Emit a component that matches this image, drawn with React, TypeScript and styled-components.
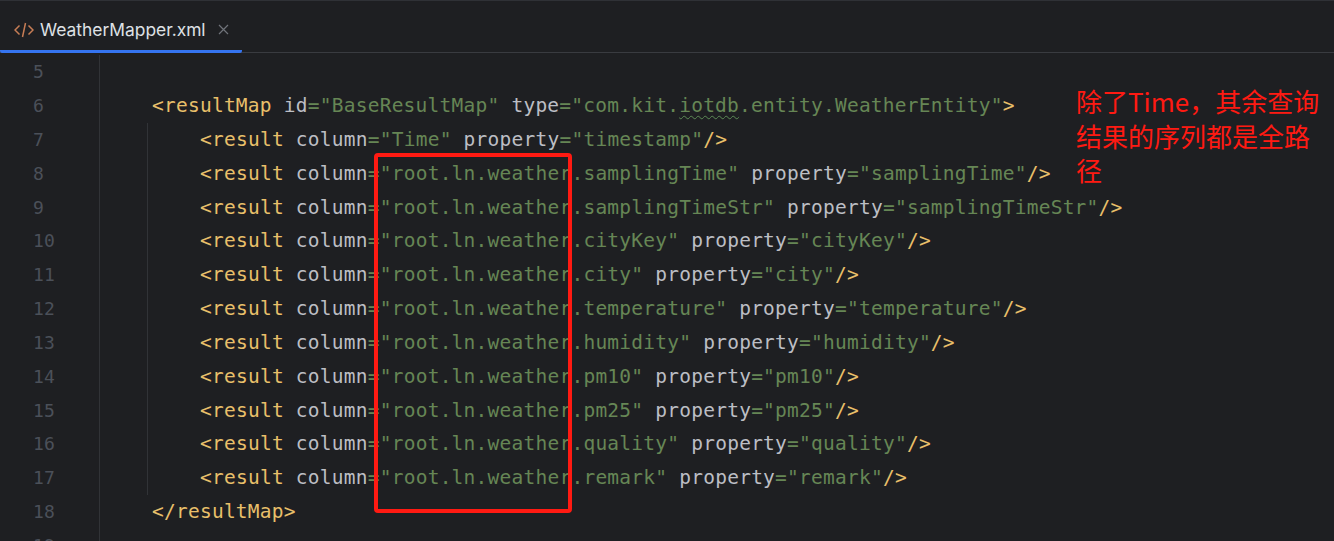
import React from 'react';
import styled, { createGlobalStyle } from 'styled-components';

const GlobalStyle = createGlobalStyle`
  html, body {
    margin: 0;
    padding: 0;
    height: 100%;
    background: #1e1f22;
    overflow: hidden;
  }
`;

const Window = styled.div`
  position: relative;
  width: 1334px;
  height: 541px;
  overflow: hidden;
  background: #1e1f22;
  border-top: 1px solid #2f3136;
  box-sizing: border-box;
`;

const TabBar = styled.div`
  display: flex;
  height: 52px;
  box-sizing: border-box;
  border-bottom: 1px solid #393b40;
`;

const Tab = styled.div`
  display: flex;
  align-items: center;
  gap: 6px;
  width: 242px;
  height: 52px;
  box-sizing: border-box;
  padding: 8px 0 0 14px;
  border-bottom: 3px solid #3574f0;
  border-radius: 0 0 2px 2px;
`;

const TabName = styled.span`
  font-family: 'Inter', 'Noto Sans', sans-serif;
  font-size: 17.4px;
  color: #dfe1e5;
`;

const CloseMark = styled.svg`
  margin-left: 6px;
`;

const Editor = styled.div`
  display: flex;
  padding-top: 2.4px;
`;

const Gutter = styled.div`
  flex: none;
  width: 100px;
  box-sizing: border-box;
  height: 500px;
  border-right: 1px solid #313337;
  padding-left: 33px;
`;

const LineNumber = styled.div`
  height: 33.82px;
  line-height: 33.82px;
  font-family: 'DejaVu Sans Mono', 'Liberation Mono', monospace;
  font-size: 18px;
  letter-spacing: 0.2px;
  color: #4b5059;
`;

const Code = styled.div`
  padding-left: 52px;
  font-family: 'DejaVu Sans Mono', 'Liberation Mono', monospace;
  font-size: 19.5px;
  letter-spacing: 0.24px;
  color: #bcbec4;
  white-space: pre;
`;

const Line = styled.div`
  height: 33.82px;
  line-height: 33.82px;
`;

const ResultGroup = styled.div`
  margin-left: -5px;
  padding-left: 52px;
  border-left: 1px solid #313337;
`;

const Tag = styled.span`
  color: #e8bf6a;
`;

const Str = styled.span`
  color: #668655;
`;

const Squiggle = styled.span`
  text-decoration: underline wavy #5c8a55 1px;
  text-underline-offset: 3px;
`;

const RedBox = styled.div`
  position: absolute;
  left: 374px;
  top: 152px;
  width: 198px;
  height: 360px;
  box-sizing: border-box;
  border: 4px solid #ff1a12;
  border-radius: 4px;
`;

const Note = styled.div`
  position: absolute;
  left: 1076px;
  top: 83px;
  width: 250px;
  font-family: 'Noto Sans CJK SC', 'Noto Sans', sans-serif;
  font-size: 26px;
  line-height: 34.6px;
  color: #ff1a12;
`;

const results: [string, string][] = [
  ['root.ln.weather.samplingTime', 'samplingTime'],
  ['root.ln.weather.samplingTimeStr', 'samplingTimeStr'],
  ['root.ln.weather.cityKey', 'cityKey'],
  ['root.ln.weather.city', 'city'],
  ['root.ln.weather.temperature', 'temperature'],
  ['root.ln.weather.humidity', 'humidity'],
  ['root.ln.weather.pm10', 'pm10'],
  ['root.ln.weather.pm25', 'pm25'],
  ['root.ln.weather.quality', 'quality'],
  ['root.ln.weather.remark', 'remark'],
];

function ResultLine({ column, property }: { column: string; property: string }) {
  return (
    <Line>
      <Tag>&lt;result</Tag> column<Str>="{column}"</Str> property<Str>="{property}"</Str>
      <Tag>/&gt;</Tag>
    </Line>
  );
}

export default function App() {
  return (
    <Window>
      <GlobalStyle />
      <TabBar>
        <Tab>
          <svg width="20" height="16" viewBox="0 0 20 16" fill="none" stroke="#c77d55" strokeWidth="1.5">
            <path d="M5.5 3.500 1 8l4.500 4.500" />
            <path d="M11.500 1 8.500 15" />
            <path d="M14.500 3.500 19 8l-4.500 4.500" />
          </svg>
          <TabName>WeatherMapper.xml</TabName>
          <CloseMark width="11" height="11" viewBox="0 0 11 11" stroke="#6f737a" strokeWidth="1.2">
            <path d="M1 1l9 9M10 1l-9 9" />
          </CloseMark>
        </Tab>
      </TabBar>
      <Editor>
        <Gutter>
          {[5, 6, 7, 8, 9, 10, 11, 12, 13, 14, 15, 16, 17, 18, 19].map((n) => (
            <LineNumber key={n}>{n}</LineNumber>
          ))}
        </Gutter>
        <Code>
          <Line> </Line>
          <Line>
            <Tag>&lt;resultMap</Tag> id<Str>="BaseResultMap"</Str> type
            <Str>
              ="com.kit.<Squiggle>iotdb</Squiggle>.entity.WeatherEntity"
            </Str>
            <Tag>&gt;</Tag>
          </Line>
          <ResultGroup>
            <ResultLine column="Time" property="timestamp" />
            {results.map(([column, property]) => (
              <ResultLine key={property} column={column} property={property} />
            ))}
          </ResultGroup>
          <Line>
            <Tag>&lt;/resultMap&gt;</Tag>
          </Line>
        </Code>
      </Editor>
      <RedBox />
      <Note>除了Time，其余查询结果的序列都是全路径</Note>
    </Window>
  );
}
